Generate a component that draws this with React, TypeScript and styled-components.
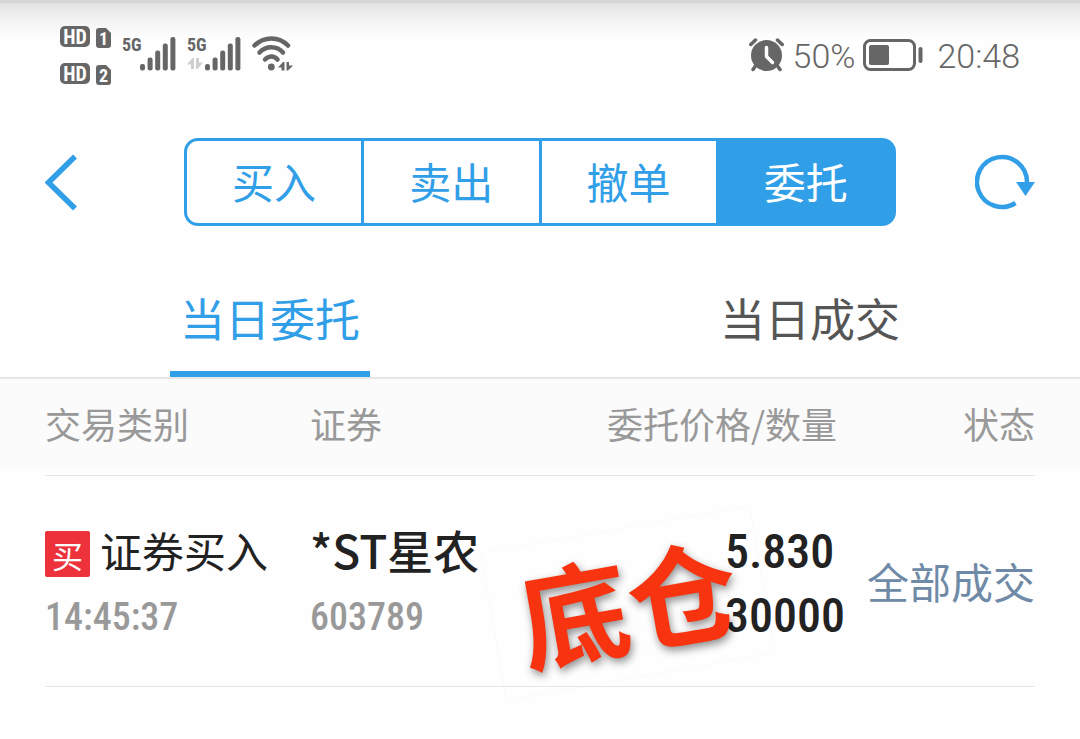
import React, { useState } from 'react';
import styled, { createGlobalStyle } from 'styled-components';

const blue = '#319fe8';
const ink = '#666666';
const digits = '"Roboto Condensed", Roboto, sans-serif';

const GlobalStyle = createGlobalStyle`
  *, *::before, *::after { box-sizing: border-box; }
  body {
    margin: 0;
    background: #fefefe;
    color: #222;
    font-family: "Noto Sans CJK SC", "Noto Sans", sans-serif;
  }
  button { font: inherit; border: 0; padding: 0; background: none; cursor: pointer; }
`;

const Screen = styled.div`
  min-height: 100vh;
  overflow-x: hidden;
`;

const StatusBar = styled.div`
  display: flex;
  justify-content: space-between;
  align-items: flex-start;
  height: 110px;
  padding: 22px 60px 0;
  border-top: 3px solid #d5d5d5;
  background: linear-gradient(#e2e2e2, #f4f4f4 18px, #fefefe 36px);
  color: ${ink};
`;

const StatusGroup = styled.div<{ $gap?: number }>`
  display: flex;
  align-items: flex-start;
  gap: ${({ $gap = 0 }) => $gap}px;
`;

const SimStack = styled.div`
  display: grid;
  grid-template-columns: 30px 15px;
  gap: 15px 6px;
  padding-top: 1px;
`;

const HdBadge = styled.span`
  height: 21px;
  border-radius: 5px;
  background: ${ink};
  color: #fff;
  font: 700 20px/22px ${digits};
  text-align: center;
`;

const SimCard = styled.span`
  height: 20px;
  margin-top: 2px;
  border-radius: 3px;
  clip-path: polygon(0 0, 10px 0, 15px 5px, 15px 100%, 0 100%);
  background: ${ink};
  color: #fff;
  font: 700 18px/22px ${digits};
  text-align: center;
`;

const Signal = styled.div`
  display: grid;
  grid-template-columns: 18px 36px;
  padding-top: 12px;
`;

const NetLabel = styled.span`
  display: block;
  height: 21px;
  font: 700 18px/16px ${digits};
`;

const NetColumn = styled.div`
  line-height: 0;
`;

const StatusText = styled.span`
  font: 300 34px/40px Roboto, sans-serif;
  padding-top: 11px;
`;

const IconSlot = styled.span<{ $top: number }>`
  display: block;
  line-height: 0;
  padding-top: ${({ $top }) => $top}px;
`;

const NavBar = styled.header`
  display: flex;
  align-items: center;
  height: 88px;
  margin: 28px 45px 0;
`;

const NavButton = styled.button`
  flex: 0 0 60px;
  height: 60px;
  line-height: 0;
`;

const Segments = styled.div`
  display: flex;
  flex: 1;
  height: 88px;
  margin: 0 79px;
`;

const Segment = styled.button<{ $active: boolean }>`
  flex: 1;
  padding-bottom: 2px;
  border: 3px solid ${blue};
  color: ${({ $active }) => ($active ? '#fff' : blue)};
  background: ${({ $active }) => ($active ? blue : 'transparent')};
  font-size: 42px;
  line-height: 80px;

  & + & { margin-left: -3px; }
  &:first-child { border-radius: 14px 0 0 14px; }
  &:last-child { border-radius: 0 14px 14px 0; }
`;

const Tabs = styled.nav`
  display: flex;
  margin-top: 47px;
  border-bottom: 2px solid #e6e6e6;
`;

const TabCell = styled.div`
  flex: 1;
  display: flex;
  justify-content: center;
`;

const Tab = styled.button<{ $active: boolean }>`
  width: 200px;
  height: 104px;
  padding-bottom: 8px;
  border-bottom: 6px solid ${({ $active }) => ($active ? blue : 'transparent')};
  color: ${({ $active }) => ($active ? blue : '#555')};
  font-size: 45px;
  line-height: 88px;
  white-space: nowrap;
`;

const Orders = styled.main`
  padding: 0 45px;
  background: linear-gradient(#fbfbfb 90px, transparent 90px);
`;

const OrderTable = styled.table`
  width: 100%;
  table-layout: fixed;
  border-collapse: collapse;
`;

const Col = styled.col<{ $width?: number }>`
  width: ${({ $width }) => ($width ? `${$width}px` : 'auto')};
`;

const HeadCell = styled.th<{ $end?: boolean; $inset?: boolean }>`
  height: 96px;
  padding: 0 ${({ $inset }) => ($inset ? 8 : 0)}px 8px 0;
  border-bottom: 1px solid #e6e6e6;
  color: #999;
  font-size: 36px;
  font-weight: 400;
  line-height: 52px;
  text-align: ${({ $end }) => ($end ? 'right' : 'left')};
  white-space: nowrap;
`;

const Cell = styled.td<{ $end?: boolean }>`
  position: relative;
  height: 211px;
  padding: 0;
  border-bottom: 1px solid #e6e6e6;
  text-align: ${({ $end }) => ($end ? 'right' : 'left')};
  white-space: nowrap;
`;

const Kind = styled.div`
  display: flex;
  align-items: flex-start;
  gap: 10px;
  height: 64px;
  font-size: 42px;
  line-height: 66px;
`;

const BuyTag = styled.span`
  width: 45px;
  height: 46px;
  margin-top: 14px;
  border-radius: 2px;
  background: #ee323c;
  color: #fff;
  font-size: 31px;
  line-height: 47px;
  text-align: center;
`;

const Stock = styled.div`
  font-size: 46px;
  font-weight: 500;
  line-height: 64px;
`;

const Minor = styled.div`
  height: 64px;
  padding-top: 4px;
  color: #999;
  font-family: ${digits};
  font-size: 38px;
  font-weight: 500;
  line-height: 64px;
`;

const Figures = styled.div`
  display: inline-block;
  padding-top: 6px;
  font-family: ${digits};
  font-size: 48px;
  font-weight: 500;
  line-height: 64px;
  text-align: left;
`;

const State = styled.span`
  color: #6f8aa6;
  font-size: 42px;
  line-height: 64px;
`;

const Sticker = styled.span`
  position: absolute;
  top: 52px;
  right: 80px;
  width: 274px;
  height: 150px;
  border: 1px solid rgba(0, 0, 0, 0.02);
  transform: rotate(-10deg);
  color: #f7340f;
  font-size: 110px;
  font-weight: 700;
  line-height: 140px;
  text-align: center;
  text-shadow: 1px 4px 8px rgba(0, 0, 0, 0.45);
`;

const SignalBars = () => (
  <svg width="36" height="34" viewBox="0 0 36 34" fill={ink} aria-hidden="true">
    <rect x="0" y="27" width="5" height="6.5" rx="2.2" />
    <rect x="7.6" y="20.5" width="5" height="13" rx="2.2" />
    <rect x="15.2" y="13.5" width="5" height="20" rx="2.2" />
    <rect x="22.8" y="6.5" width="5" height="27" rx="2.2" />
    <rect x="30.4" y="0" width="5" height="33.5" rx="2.2" />
  </svg>
);

const DataArrows = ({ color }: { color: string }) => (
  <svg width="16" height="11" viewBox="0 0 16 11" fill={color} aria-hidden="true">
    <path d="M0 6.5 5.5 0H7v11H4V6.5zM9 0h3v4.5h4L10.500 11H9z" />
  </svg>
);

const Wifi = () => (
  <svg width="42" height="36" viewBox="0 0 42 36" fill="none" stroke={ink} strokeLinecap="round" aria-hidden="true">
    <path d="M2.500 9.500C12 0 27 0 36 9.500" strokeWidth="4.500" />
    <path d="M7.500 16.500C14 9.500 25 9.500 31 16.500" strokeWidth="4.500" />
    <path d="M13 23.500C17 19.500 22 19.500 25.500 23.500" strokeWidth="4.500" />
    <circle cx="19.300" cy="31" r="3.400" fill={ink} stroke="none" />
    <path d="M26 31.500 31 26h1.500v8.500h-3v-3zM34.500 26H37v3.500h4L36 34.500h-1.500z" fill={ink} stroke="none" />
  </svg>
);

const Alarm = () => (
  <svg width="36" height="34" viewBox="0 0 36 34" fill="none" stroke={ink} strokeLinecap="round" aria-hidden="true">
    <circle cx="17.500" cy="17.500" r="15.500" fill={ink} stroke="none" />
    <path d="M1.800 6.500 6.500 2M33.200 6.500 28.500 2" strokeWidth="3.500" />
    <path d="M6.500 28 4 31.500M28.500 28l2.500 3.500" strokeWidth="3.500" />
    <path d="M17.500 9.500v9l6 6" stroke="#fff" strokeWidth="3.500" strokeLinejoin="round" />
  </svg>
);

const Battery = () => (
  <svg width="66" height="32" viewBox="0 0 66 32" fill="none" aria-hidden="true">
    <rect x="1.500" y="1.500" width="50" height="29" rx="6" stroke={ink} strokeWidth="3" />
    <rect x="6" y="6" width="20" height="20" rx="2" fill={ink} />
    <rect x="55.500" y="8" width="4" height="16" rx="2" fill={ink} />
  </svg>
);

const BackIcon = () => (
  <svg width="60" height="60" viewBox="0 0 60 60" fill="none" stroke={blue} strokeWidth="5.500" aria-hidden="true">
    <path d="M30 4.500 3.500 30.500l26.500 26" />
  </svg>
);

const RefreshIcon = () => (
  <svg width="60" height="60" viewBox="0 0 60 60" fill="none" aria-hidden="true">
    <path d="M40.500 51A25 25 0 1 1 52 30" stroke={blue} strokeWidth="4.500" />
    <path d="M41 30h19L50.500 44z" fill={blue} />
  </svg>
);

const segments = ['买入', '卖出', '撤单', '委托'];
const tabs = ['当日委托', '当日成交'];
const orders = [
  { tag: '买', kind: '证券买入', time: '14:45:37', name: '*ST星农', code: '603789', price: '5.830', amount: '30000', state: '全部成交', note: '底仓' },
];

export default function App() {
  const [segment, setSegment] = useState(3);
  const [tab, setTab] = useState(0);

  return (
    <Screen>
      <GlobalStyle />
      <StatusBar>
        <StatusGroup $gap={11}>
          <SimStack>
            <HdBadge>HD</HdBadge>
            <SimCard>1</SimCard>
            <HdBadge>HD</HdBadge>
            <SimCard>2</SimCard>
          </SimStack>
          <Signal>
            <NetLabel>5G</NetLabel>
            <SignalBars />
          </Signal>
          <Signal>
            <NetColumn>
              <NetLabel>5G</NetLabel>
              <DataArrows color="#cfcfcf" />
            </NetColumn>
            <SignalBars />
          </Signal>
          <IconSlot $top={11}><Wifi /></IconSlot>
        </StatusGroup>
        <StatusGroup $gap={8}>
          <IconSlot $top={13}><Alarm /></IconSlot>
          <StatusText>50%</StatusText>
          <IconSlot $top={14}><Battery /></IconSlot>
          <StatusText>20:48</StatusText>
        </StatusGroup>
      </StatusBar>

      <NavBar>
        <NavButton aria-label="返回"><BackIcon /></NavButton>
        <Segments>
          {segments.map((label, i) => (
            <Segment key={label} $active={i === segment} onClick={() => setSegment(i)}>{label}</Segment>
          ))}
        </Segments>
        <NavButton aria-label="刷新"><RefreshIcon /></NavButton>
      </NavBar>

      <Tabs>
        {tabs.map((label, i) => (
          <TabCell key={label}>
            <Tab $active={i === tab} onClick={() => setTab(i)}>{label}</Tab>
          </TabCell>
        ))}
      </Tabs>

      <Orders>
        <OrderTable>
          <colgroup>
            <Col $width={265} />
            <Col $width={190} />
            <Col />
            <Col $width={190} />
          </colgroup>
          <thead>
            <tr>
              <HeadCell>交易类别</HeadCell>
              <HeadCell>证券</HeadCell>
              <HeadCell $end $inset>委托价格/数量</HeadCell>
              <HeadCell $end>状态</HeadCell>
            </tr>
          </thead>
          <tbody>
            {orders.map((o) => (
              <tr key={o.code}>
                <Cell>
                  <Kind><BuyTag>{o.tag}</BuyTag>{o.kind}</Kind>
                  <Minor>{o.time}</Minor>
                </Cell>
                <Cell>
                  <Stock>{o.name}</Stock>
                  <Minor>{o.code}</Minor>
                </Cell>
                <Cell $end>
                  <Figures>
                    <div>{o.price}</div>
                    <div>{o.amount}</div>
                  </Figures>
                  <Sticker>{o.note}</Sticker>
                </Cell>
                <Cell $end><State>{o.state}</State></Cell>
              </tr>
            ))}
          </tbody>
        </OrderTable>
      </Orders>
    </Screen>
  );
}
